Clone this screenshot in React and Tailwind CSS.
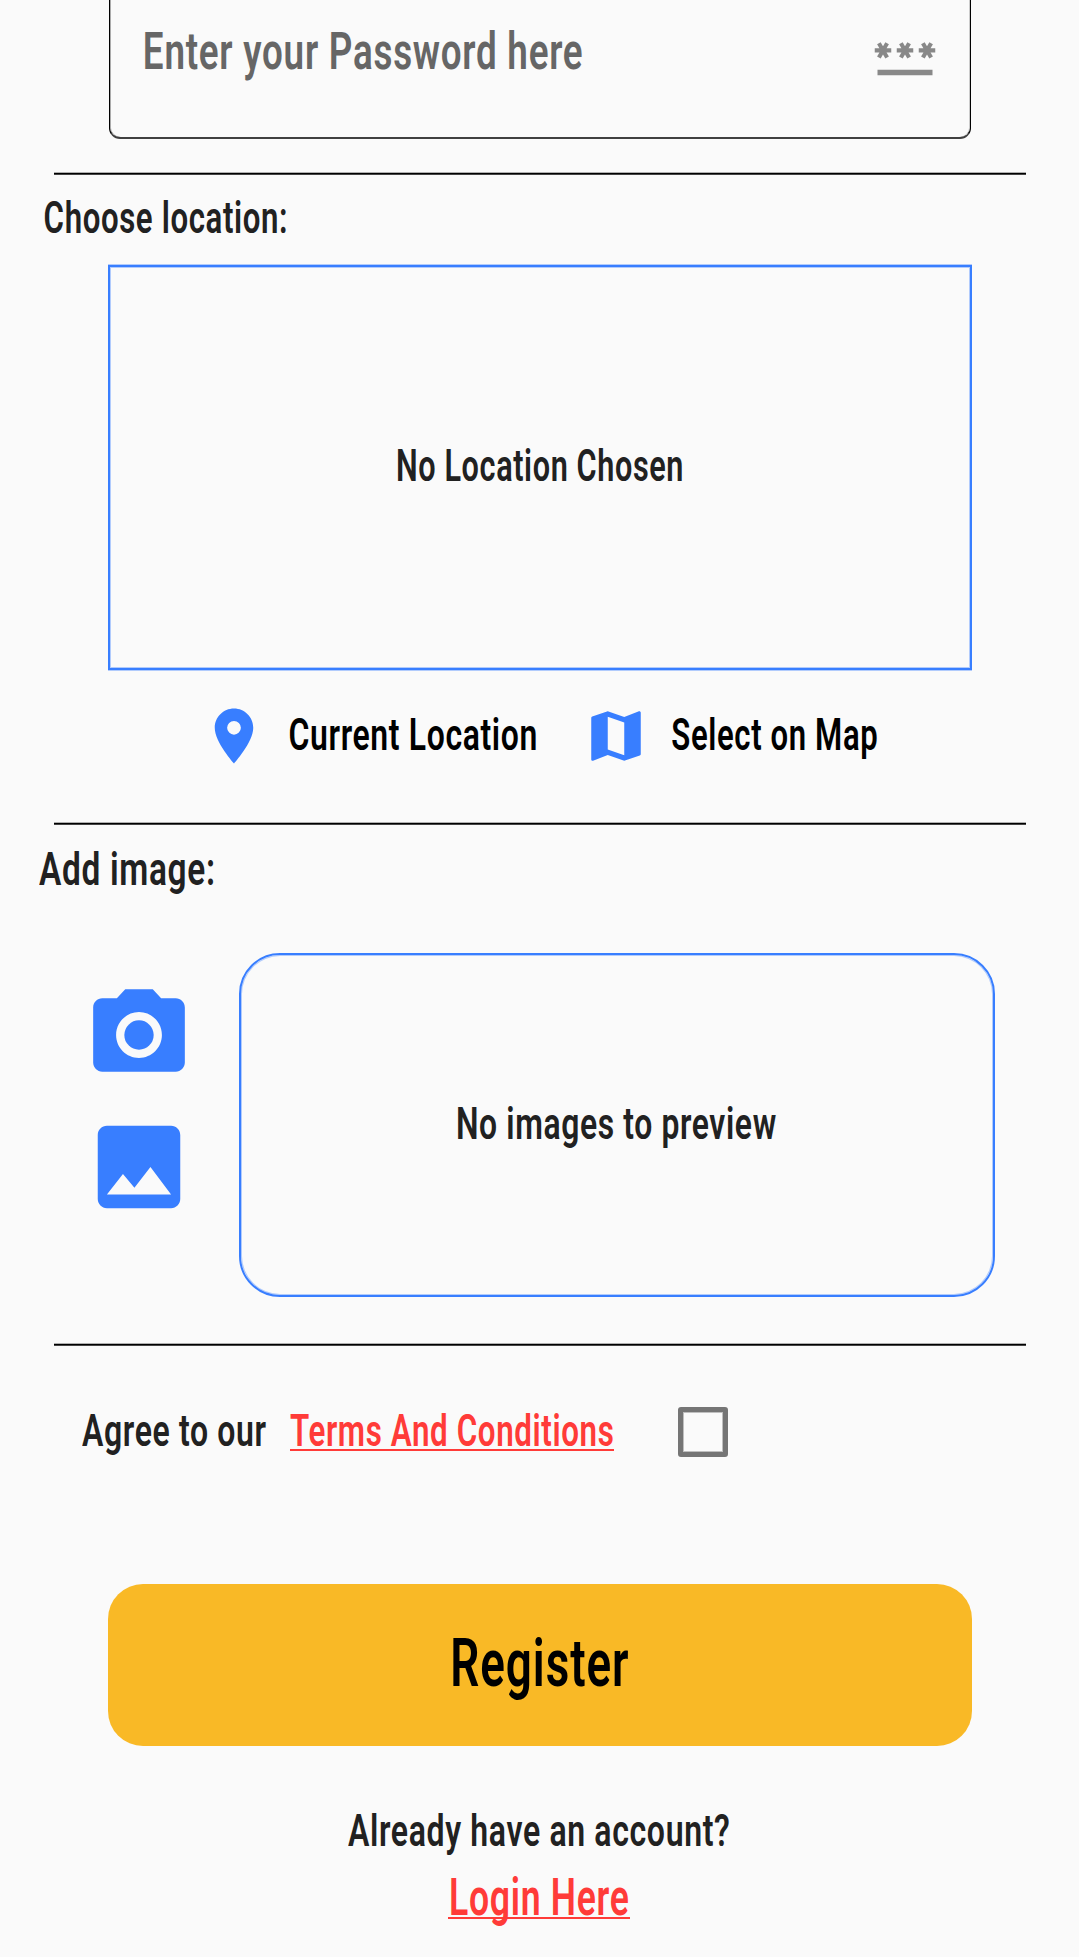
import { useLayoutEffect, useRef } from "react";
import { MdCameraAlt, MdImage, MdLocationOn, MdMap, MdPassword } from "react-icons/md";

// Condenses a line of text so that its ink spans exactly the width of its box.
function Condensed({ children, className = "" }) {
  const box = useRef(null);
  const line = useRef(null);

  useLayoutEffect(() => {
    const style = getComputedStyle(line.current);
    const ctx = document.createElement("canvas").getContext("2d");
    ctx.font = `${style.fontWeight} ${style.fontSize} ${style.fontFamily}`;
    ctx.letterSpacing = style.letterSpacing;
    const m = ctx.measureText(line.current.textContent);
    const scale = box.current.clientWidth / (m.actualBoundingBoxRight + m.actualBoundingBoxLeft);
    line.current.style.transform = `translateX(${m.actualBoundingBoxLeft * scale}px) scaleX(${scale})`;
  }, []);

  return (
    <div ref={box} className={`flex h-15 shrink-0 items-center font-semibold tracking-[0.02em] ${className}`}>
      <span ref={line} className="inline-block origin-left whitespace-nowrap leading-[60px]">
        {children}
      </span>
    </div>
  );
}

function Divider() {
  return <hr className="mx-[54px] h-[3px] w-[972px] shrink-0 border-y border-t-[#b0b0b0] border-b-[#444] bg-black" />;
}

export default function App() {
  return (
    <main className="flex h-[1957px] w-[1079px] flex-col overflow-hidden bg-[#fafafa] font-['Roboto',sans-serif] text-[45px] text-[#212121]">
      <div className="ml-[109px] flex h-[139px] w-[862px] shrink-0 items-start justify-between rounded-b-[11px] border border-b-2 border-t-0 border-black border-b-[#404040] pl-[35px] pr-[32px] shadow-[inset_1px_0_#00000050,inset_-1px_0_#00000030]">
        <Condensed className="mt-[22px] w-[437px] text-[52px] text-[#666]">Enter your Password here</Condensed>
        <MdPassword className="mt-[23px] size-[66px] text-[#888]" />
      </div>

      <section className="mt-[33px] flex h-[650px] shrink-0 flex-col">
        <Divider />
        <Condensed className="ml-[45px] mt-[13px] w-[241px]">Choose location:</Condensed>
        <div className="ml-[108px] mt-[17px] flex h-[405px] w-[864px] shrink-0 items-center justify-center border-2 border-[#387eff] shadow-[0_-1px_#387eff60,0_1px_#387eff60,inset_0_0_0_1px_#387eff60]">
          <Condensed className="mt-[-4px] w-[284px]">No Location Chosen</Condensed>
        </div>
        <div className="mt-[33px] flex items-center pl-[201px] text-[44.5px] text-black">
          <MdLocationOn className="size-[66px] text-[#387eff]" />
          <Condensed className="mb-[3px] ml-[23px] w-[246px]">Current Location</Condensed>
          <MdMap className="ml-[47px] size-[66px] text-[#387eff]" />
          <Condensed className="mb-[3px] ml-[23px] w-[205px]">Select on Map</Condensed>
        </div>
      </section>

      <section className="flex h-[521px] shrink-0 flex-col">
        <Divider />
        <Condensed className="ml-[39px] mt-[14px] w-[174px] text-[47px]">Add image:</Condensed>
        <div className="mt-[54px] flex pl-[84px]">
          <div className="mt-[27px] flex w-[155px] flex-col gap-[22px] text-[#387eff]">
            <MdCameraAlt className="size-[110px]" />
            <MdImage className="size-[110px]" />
          </div>
          <div className="flex h-[344px] w-[756px] items-center justify-center rounded-[41px] border-2 border-[#387eff] shadow-[inset_0_0_0_1px_#387eff60]">
            <Condensed className="mt-[-3px] w-[318px]">No images to preview</Condensed>
          </div>
        </div>
      </section>

      <Divider />
      <div className="mt-[55px] flex h-[60px] shrink-0 pl-[82px]">
        <Condensed className="w-[184px]">Agree to our</Condensed>
        <a className="ml-[24px] h-[50px] w-[324px] border-b-2 border-[#ff3b38] text-[#ff3b38]">
          <Condensed className="w-[323px]">Terms And Conditions</Condensed>
        </a>
        <span role="checkbox" aria-checked="false" aria-label="Agree" className="ml-[64px] mt-[6px] size-[50px] rounded-[3px] border-5 border-[#757575] shadow-[inset_0_0_0_1px_#75757570]" />
      </div>

      <button className="ml-[108px] mt-[123px] flex h-[162px] w-[864px] shrink-0 items-center justify-center rounded-[35px] bg-[#f9b926] text-[66px] text-black">
        <Condensed className="mb-[2px] w-[175px]">Register</Condensed>
      </button>

      <Condensed className="ml-[348px] mt-[55px] w-[381px]">Already have an account?</Condensed>
      <a className="ml-[448px] mt-[6px] flex h-[52px] w-[182px] shrink-0 border-b-2 border-[#ff3b38] pl-[3px] text-[52.5px] text-[#ff3b38]">
        <Condensed className="w-[177px]">Login Here</Condensed>
      </a>
    </main>
  );
}
